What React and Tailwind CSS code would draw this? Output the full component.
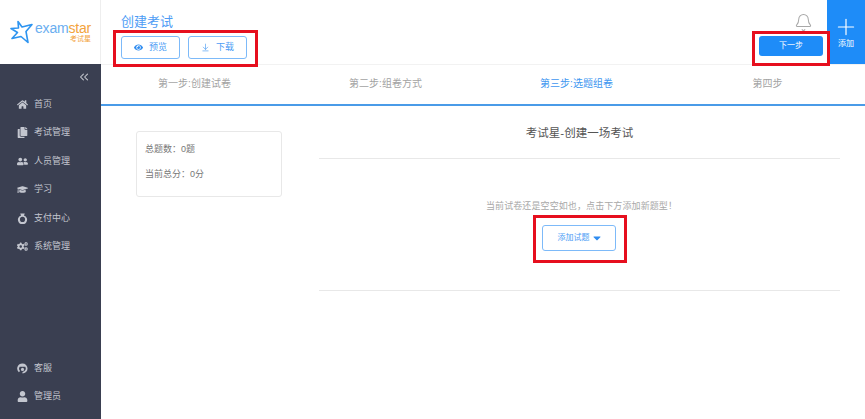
import React from 'react';
import { FaHome, FaCopy, FaUserFriends, FaGraduationCap, FaCogs, FaUser, FaCaretDown, FaEye } from 'react-icons/fa';
import { Bell, Plus, ChevronsLeft, ArrowDownToLine } from 'lucide-react';

const font = 'font-["Liberation_Sans","Noto_Sans_CJK_SC",sans-serif]';

const PayIcon = ({ className }) => (
  <svg viewBox="0 0 12 12" className={className} fill="currentColor">
    <path d="M3.5 0.5 H8.5 L7.6 2.6 A5 5 0 1 1 4.4 2.6 Z M6 4.2 A2.8 2.8 0 1 0 6 9.8 A2.8 2.8 0 1 0 6 4.2 Z" fillRule="evenodd" />
  </svg>
);

const ServiceIcon = ({ className }) => (
  <svg viewBox="0 0 12 12" className={className} fill="currentColor">
    <path d="M6 0.5 A5.5 5.5 0 0 1 11.5 6 A5.5 5.5 0 0 1 6 11.5 L6 9.8 A3.8 3.8 0 0 0 9 4 L3 4 A3.8 3.8 0 0 0 3.4 8.8 L2 10 A5.5 5.5 0 0 1 6 0.5 Z" />
    <circle cx="6" cy="7" r="1.7" />
  </svg>
);

const navTop = [
  { label: '首页', Icon: FaHome },
  { label: '考试管理', Icon: FaCopy },
  { label: '人员管理', Icon: FaUserFriends },
  { label: '学习', Icon: FaGraduationCap },
  { label: '支付中心', Icon: PayIcon },
  { label: '系统管理', Icon: FaCogs },
];
const navBottom = [
  { label: '客服', Icon: ServiceIcon },
  { label: '管理员', Icon: FaUser },
];
const steps = ['第一步:创建试卷', '第二步:组卷方式', '第三步:选题组卷', '第四步'];

const NavItem = ({ label, Icon }) => (
  <div className="flex h-[28.5px] items-center pl-[17px] text-[9px] text-[#c3c6cf]">
    <Icon className="w-[11px] h-[11px] mr-[6px] shrink-0" />
    <span>{label}</span>
  </div>
);

const Logo = () => (
  <div className="flex h-[64px] w-[101px] shrink-0 items-center border-r border-[#eeeeee] pl-[10px]">
    <svg width="24" height="26" viewBox="0 0 24 25" fill="none" className="mr-px">
      <path d="M8 2 L12 7.5 L22 5 L16 12 L18 23 L11 17 L2 19 L7.5 13 L1 9 L8.5 8.5 Z" stroke="#2d94f0" strokeWidth="1.6" strokeLinejoin="round" />
    </svg>
    <div className="flex flex-col leading-none">
      <div className="text-[14px] leading-[14px] tracking-[-0.2px]">
        <span className="text-[#6aaef0]">exam</span>
        <span className="text-[#f3a33c]">star</span>
      </div>
      <div className="text-right text-[7px] leading-[8px] text-[#f3a33c]">考试星</div>
    </div>
  </div>
);

const Highlight = ({ className }) => (
  <div className={`absolute border-[3px] border-[#e60f1e] ${className}`} />
);

export default function App() {
  return (
    <div className={`relative flex h-[419px] w-[865px] overflow-hidden bg-white ${font}`}>
      <div className="flex w-[101px] shrink-0 flex-col">
        <Logo />
        <div className="flex flex-1 flex-col bg-[#3a3f51]">
          <div className="flex h-[26px] items-center justify-end pr-[10px] text-[#c8cad1]">
            <ChevronsLeft className="w-[14px] h-[14px]" strokeWidth={1.8} />
          </div>
          <div>
            {navTop.map((item) => <NavItem key={item.label} {...item} />)}
          </div>
          <div className="mt-auto pb-[8px]">
            {navBottom.map((item) => <NavItem key={item.label} {...item} />)}
          </div>
        </div>
      </div>

      <div className="flex min-w-0 flex-1 flex-col">
        <div className="flex h-[65px] shrink-0 border-b border-[#f2f2f2]">
          <div className="flex-1 pl-[20px] pt-[14px]">
            <div className="text-[13px] leading-[16px] text-[#4d9cf5]">创建考试</div>
            <div className="mt-[6px] flex gap-[8px]">
              <button type="button" className="flex h-[23px] w-[59px] items-center justify-center rounded-[3px] border border-[#7dbaf9] text-[9px] text-[#4d9cf5]">
                <FaEye className="mr-[6px] w-[9px] h-[9px] text-[#2f8cf0]" />预览
              </button>
              <button type="button" className="flex h-[23px] w-[59px] items-center justify-center rounded-[3px] border border-[#7dbaf9] text-[9px] text-[#4d9cf5]">
                <ArrowDownToLine className="mr-[6px] w-[9px] h-[9px] text-[#2f8cf0]" strokeWidth={1.5} />下载
              </button>
            </div>
          </div>
          <div className="flex w-[68px] shrink-0 flex-col items-center pt-[13px]">
            <Bell className="ml-[24px] w-[19px] h-[19px] text-[#a8a8a8]" strokeWidth={1.3} />
            <button type="button" className="mt-[4px] h-[20px] w-[64px] rounded-[3px] bg-[#1e8cf8] text-[8px] text-white">下一步</button>
          </div>
          <div className="ml-[2px] flex h-[64px] w-[38px] shrink-0 flex-col items-center bg-[#1e8cf8] pt-[14px] text-white">
            <Plus className="w-[26px] h-[26px]" strokeWidth={1.1} />
            <span className="mt-[-2px] text-[8px] leading-[12px]">添加</span>
          </div>
        </div>

        <div className="grid h-[41px] shrink-0 grid-cols-4 border-b-2 border-[#4a9be8] pb-[2px]">
          {steps.map((step, i) => (
            <div key={step} className={`flex items-center justify-center pr-[4px] text-[10px] ${i === 2 ? 'text-[#3f97f0]' : 'text-[#a3a3a3]'}`}>
              {step}
            </div>
          ))}
        </div>

        <div className="flex flex-1 pl-[35px] pt-[20px]">
          <div className="mt-[5px] h-[66px] w-[146px] shrink-0 rounded-[3px] border border-[#e8e8e8] px-[8px] pt-[11px] text-[9px] text-[#777777]">
            <p className="leading-[12px]">总题数：0题</p>
            <p className="mt-[13px] leading-[12px]">当前总分：0分</p>
          </div>
          <div className="ml-[37px] mr-[25px] flex-1">
            <div className="flex h-[32px] justify-center text-[11.5px] leading-[14px] text-[#555555]">考试星-创建一场考试</div>
            <div className="flex h-[133px] flex-col items-center border-y border-[#e8e8e8] pt-[41px]">
              <p className="pl-[4px] text-[9px] leading-[12px] tracking-[0.1px] text-[#a8a8a8]">当前试卷还是空空如也，点击下方添加新题型！</p>
              <button type="button" className="mt-[13px] mr-[2px] flex h-[26px] w-[74px] items-center justify-center rounded-[3px] border border-[#7dbaf9] pl-[3px] text-[8px] text-[#4d9cf5]">
                添加试题<FaCaretDown className="ml-[1px] w-[12px] h-[12px] text-[#2f8cf0]" />
              </button>
            </div>
          </div>
        </div>
      </div>

      <Highlight className="left-[113px] top-[30px] h-[37px] w-[145px]" />
      <Highlight className="left-[752px] top-[31px] h-[35px] w-[78px]" />
      <Highlight className="left-[533px] top-[215px] h-[48px] w-[94px]" />
    </div>
  );
}
